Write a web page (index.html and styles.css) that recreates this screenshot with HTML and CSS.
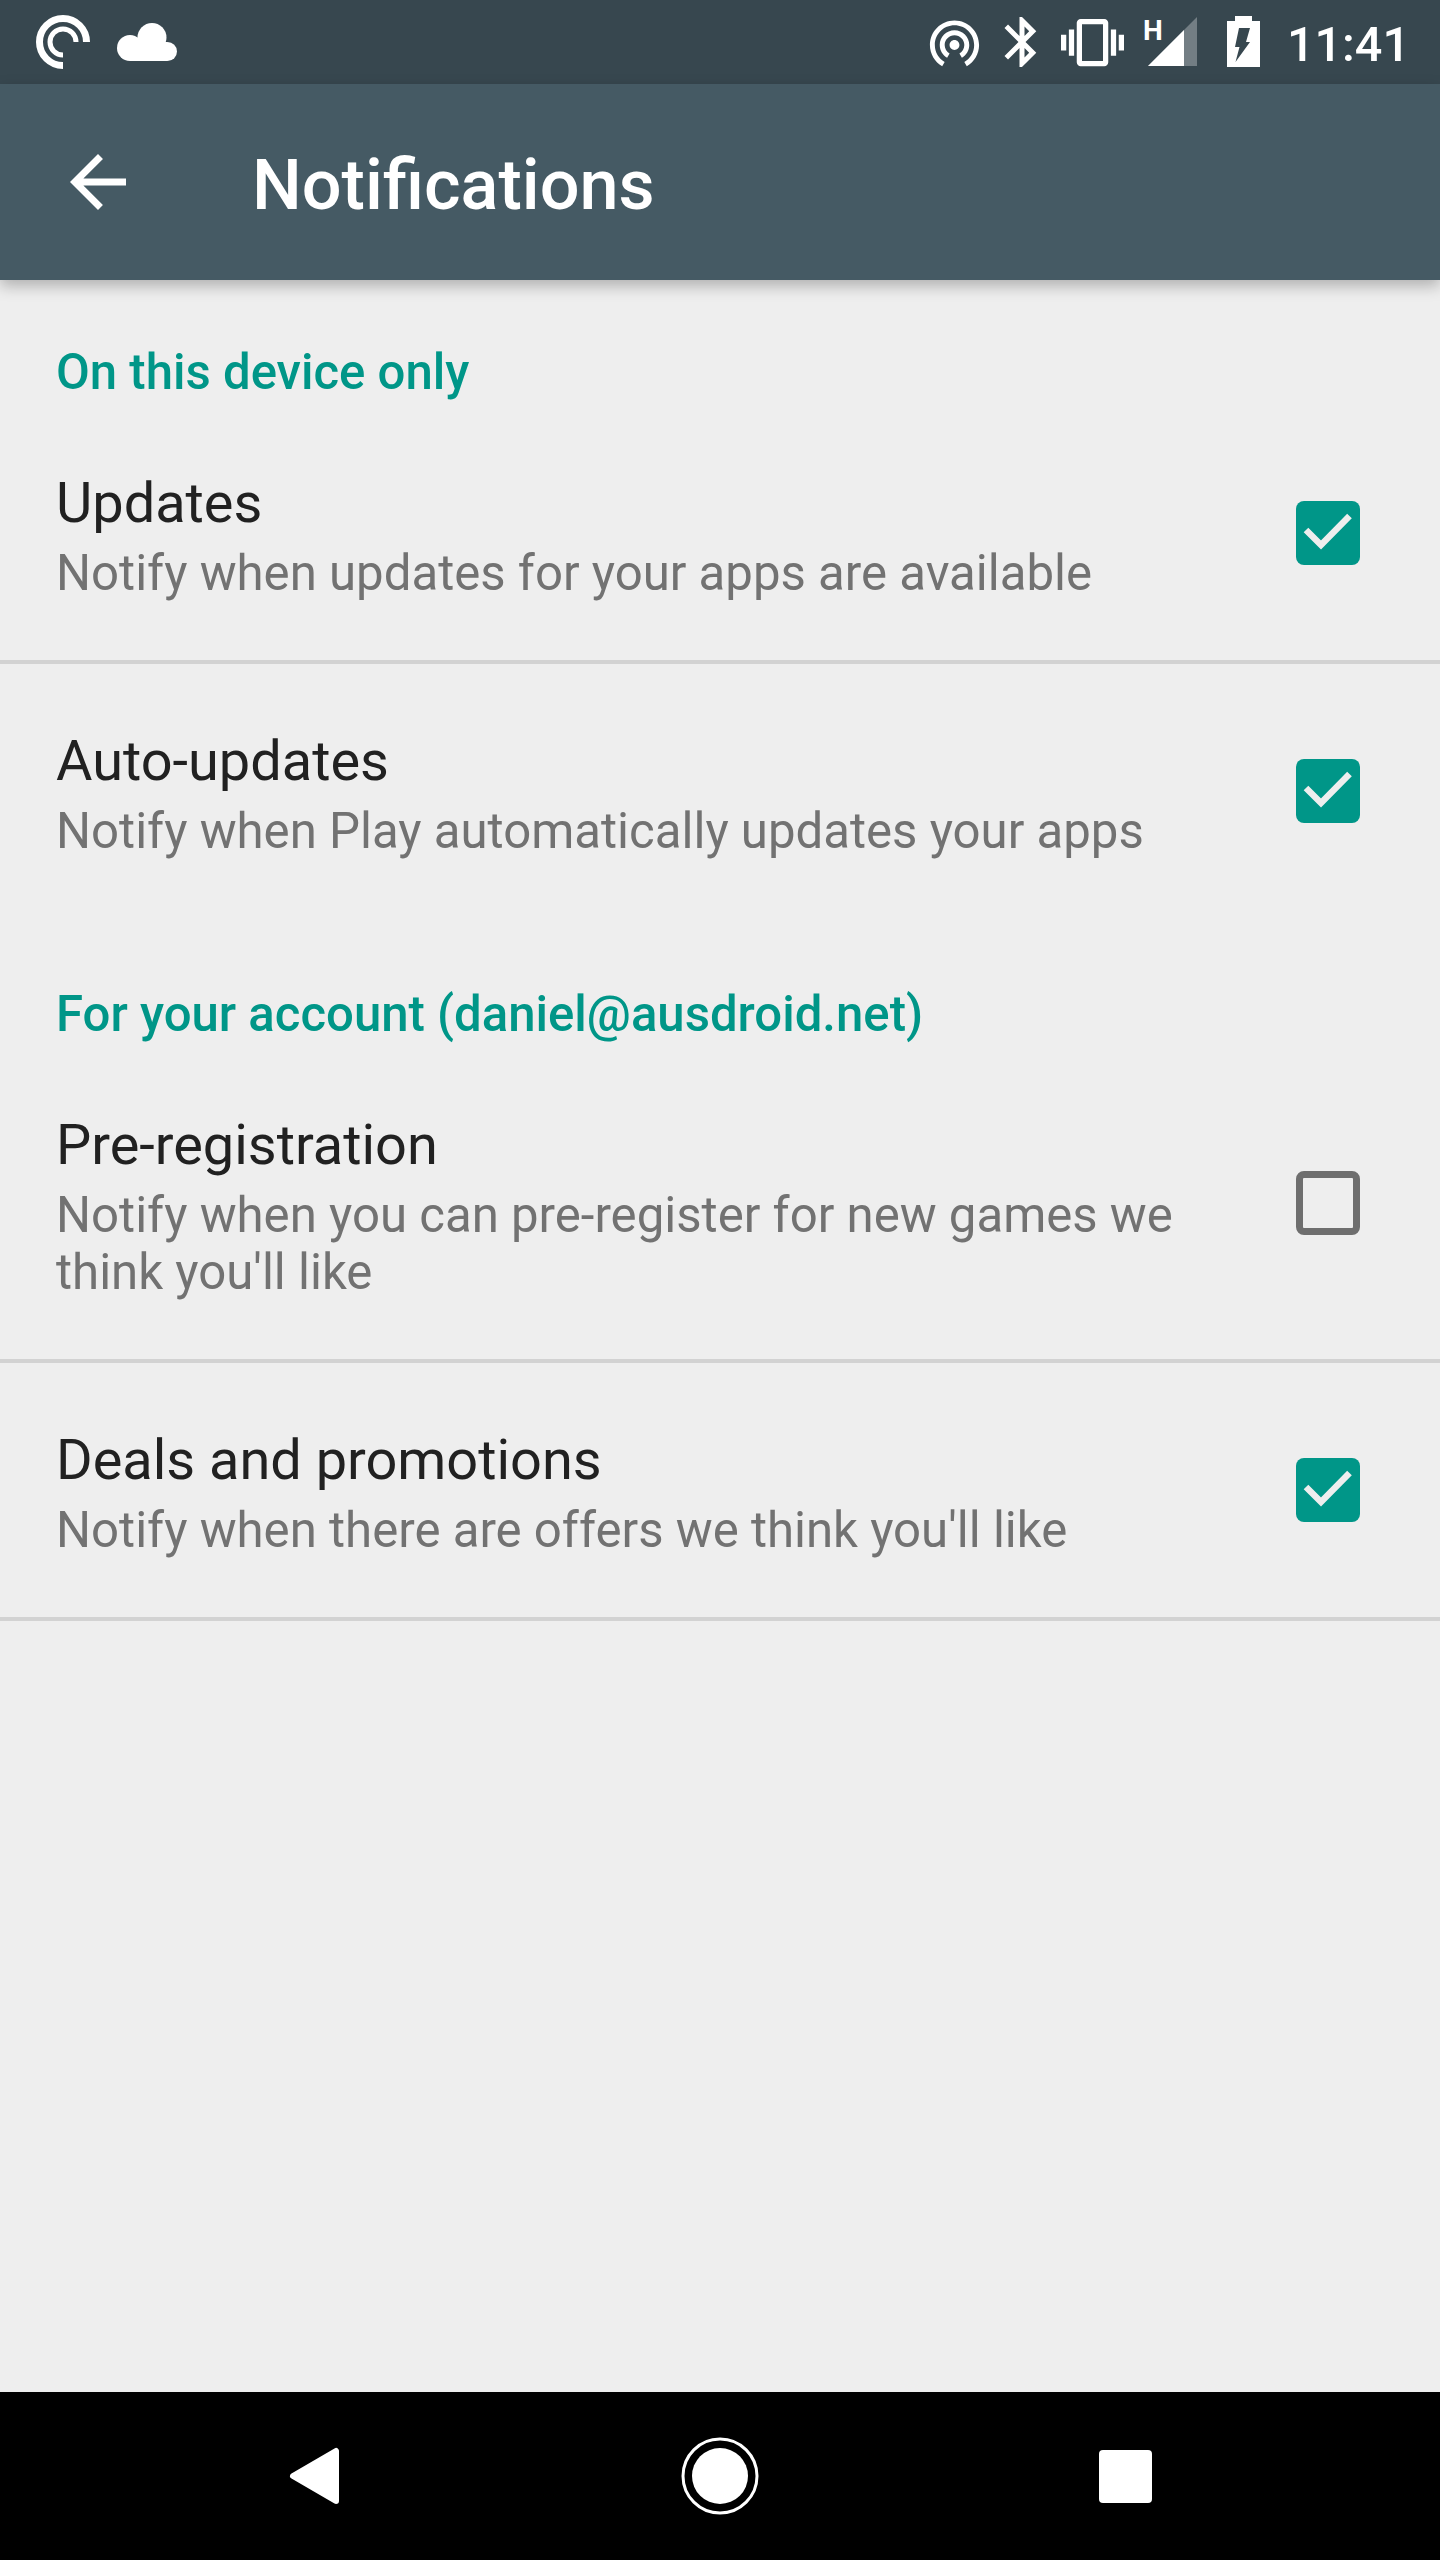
FILE: index.html
```html
<!DOCTYPE html>
<html lang="en">
<head>
<meta charset="utf-8">
<title>Notifications</title>
<link rel="stylesheet" href="styles.css">
</head>
<body>
<div class="screen">
  <header class="status">
    <div class="status-left">
      <svg class="ic-pocket" viewBox="36 15 54 54"><path class="ring-a" d="M86.5 42A23.500 23.500 0 1 0 63 65.500"/><path class="ring-b" d="M76 42A13 13 0 1 0 63 55"/></svg>
      <svg class="ic-cloud" viewBox="117 23 60 38"><circle cx="130" cy="48" r="13"/><circle cx="152" cy="37.500" r="14.500"/><circle cx="167.500" cy="51.500" r="9.500"/><rect x="130" y="42" width="37" height="19"/></svg>
    </div>
    <div class="status-right">
      <svg class="ic-tether" viewBox="0 0 24 24"><path d="M12 11c-1.100 0-2 .9-2 2s.9 2 2 2 2-.9 2-2-.9-2-2-2zm6 2c0-3.310-2.690-6-6-6s-6 2.690-6 6c0 2.220 1.210 4.150 3 5.190l1-1.740c-1.190-.7-2-1.970-2-3.450 0-2.210 1.790-4 4-4s4 1.790 4 4c0 1.480-.81 2.750-2 3.450l1 1.740c1.790-1.040 3-2.970 3-5.190zM12 3C6.480 3 2 7.480 2 13c0 3.700 2.010 6.920 4.990 8.650l1-1.730C5.610 18.530 4 15.960 4 13c0-4.420 3.580-8 8-8s8 3.580 8 8c0 2.960-1.610 5.530-4 6.920l1 1.730c2.990-1.730 5-4.950 5-8.650 0-5.520-4.480-10-10-10z"/></svg>
      <svg class="ic-bt" viewBox="0 0 24 24"><path d="M17.710 7.710L12 2h-1v7.590L6.410 5 5 6.410 10.590 12 5 17.590 6.410 19 11 14.410V22h1l5.710-5.710-4.300-4.290 4.300-4.290zM13 5.830l1.880 1.880L13 9.590V5.830zm1.880 10.460L13 18.170v-3.760l1.880 1.880z"/></svg>
      <svg class="ic-vib" viewBox="0 0 24 24"><path d="M0 15h2V9H0v6zm3 2h2V7H3v10zm19-8v6h2V9h-2zm-3 8h2V7h-2v10zM16.500 3h-9C6.670 3 6 3.670 6 4.500v15c0 .83.67 1.500 1.500 1.500h9c.83 0 1.500-.67 1.500-1.500v-15c0-.83-.67-1.500-1.500-1.500zM16 19H8V5h8v14z"/></svg>
      <div class="signal">
        <span class="signal-h">H</span>
        <svg class="ic-signal" viewBox="0 0 54 50"><polygon class="sig-back" points="5,49 54,0 54,49"/><polygon points="5,49 41,13 41,49"/></svg>
      </div>
      <svg class="ic-batt" viewBox="0 0 33 51"><path fill-rule="evenodd" d="M8 0h17v5h8v46H0V5h8zM12 12h11l-4 14h4L8.500 46l4-15H8z"/></svg>
      <span class="time">11:41</span>
    </div>
  </header>

  <div class="toolbar">
    <svg class="ic-back" viewBox="0 0 24 24"><path d="M20 11H7.830l5.590-5.590L12 4l-8 8 8 8 1.410-1.410L7.830 13H20v-2z"/></svg>
    <h1 class="toolbar-title">Notifications</h1>
  </div>

  <main class="content">
    <h2 class="section">On this device only</h2>
    <div class="row row-line">
      <div class="row-text">
        <div class="row-title">Updates</div>
        <div class="row-sum">Notify when updates for your apps are available</div>
      </div>
      <div class="box box-on"><svg class="check" viewBox="0 0 64 64"><path d="M10 29L25 44L53.500 15"/></svg></div>
    </div>
    <div class="row">
      <div class="row-text">
        <div class="row-title">Auto-updates</div>
        <div class="row-sum">Notify when Play automatically updates your apps</div>
      </div>
      <div class="box box-on"><svg class="check" viewBox="0 0 64 64"><path d="M10 29L25 44L53.500 15"/></svg></div>
    </div>
    <h2 class="section">For your account (daniel@ausdroid.net)</h2>
    <div class="row row-line">
      <div class="row-text">
        <div class="row-title">Pre-registration</div>
        <div class="row-sum">Notify when you can pre-register for new games we think you'll like</div>
      </div>
      <div class="box box-off"></div>
    </div>
    <div class="row row-line">
      <div class="row-text">
        <div class="row-title">Deals and promotions</div>
        <div class="row-sum">Notify when there are offers we think you'll like</div>
      </div>
      <div class="box box-on"><svg class="check" viewBox="0 0 64 64"><path d="M10 29L25 44L53.500 15"/></svg></div>
    </div>
  </main>

  <nav class="navbar">
    <div class="nav-cell"><svg class="nav-ic" viewBox="0 0 84 84"><polygon class="nav-back" points="20,42 63,17 63,67"/></svg></div>
    <div class="nav-cell"><svg class="nav-ic" viewBox="0 0 84 84"><circle class="nav-ring" cx="42" cy="42" r="37"/><circle cx="42" cy="42" r="28"/></svg></div>
    <div class="nav-cell"><div class="nav-square"></div></div>
  </nav>
</div>
</body>
</html>
```

FILE: styles.css
```css
* { box-sizing: border-box; }
html, body { margin: 0; padding: 0; }
body { width: 1440px; height: 2560px; overflow: hidden; font-family: Roboto, "Noto Sans", sans-serif; background: #eeeeee; }
svg { display: block; fill: #ffffff; flex: none; }

.screen { display: flex; flex-direction: column; width: 1440px; height: 2560px; }

.status { flex: none; height: 84px; background: #37474f; display: flex; justify-content: space-between; align-items: flex-start; padding: 0 30px 0 36px; color: #fff; }
.status-left { display: flex; align-items: flex-start; gap: 27px; padding-top: 15px; }
.status-right { display: flex; align-items: flex-start; }
.ic-pocket { width: 54px; height: 54px; fill: none; stroke: #fff; }
.ring-a { stroke-width: 7; }
.ring-b { stroke-width: 5; }
.ic-cloud { width: 60px; height: 38px; margin-top: 8px; }
.ic-tether { width: 59px; height: 59px; margin-top: 13px; }
.ic-bt { width: 60px; height: 60px; margin: 12px 0 0 8px; }
.ic-vib { width: 63px; height: 63px; margin: 11px 0 0 9px; }
.signal { position: relative; width: 54px; height: 50px; margin: 17px 0 0 19px; }
.signal-h { position: absolute; left: 0; top: -3px; font-size: 28px; line-height: 33px; font-weight: 700; }
.ic-signal { width: 54px; height: 50px; }
.sig-back { fill: rgba(255, 255, 255, 0.3); }
.ic-batt { width: 33px; height: 51px; margin: 16px 0 0 30px; }
.time { font-size: 48.5px; line-height: 58px; font-weight: 500; margin: 16px 0 0 27px; }

.toolbar { flex: none; position: relative; z-index: 1; height: 196px; background: #455a64; display: flex; align-items: center; padding-left: 56px; box-shadow: 0 6px 14px rgba(0, 0, 0, 0.26); }
.ic-back { width: 84px; height: 84px; }
.toolbar-title { margin: 6px 0 0 112px; font-size: 70.2px; line-height: 82px; font-weight: 500; color: #fff; }

.content { flex: 1; min-height: 0; }
.section { margin: 0; height: 122px; padding: 63px 56px 0; font-size: 49.1px; line-height: 58px; font-weight: 500; color: #009688; }

.row { display: flex; align-items: center; justify-content: space-between; padding: 68px 80px 62px 56px; }
.row-line { padding-bottom: 58px; border-bottom: 4px solid #d2d2d2; }
.row-line + .row { padding-top: 64px; }
.row-text { width: 1130px; }
.row-title { font-size: 55.9px; line-height: 66px; color: #212121; }
.row-sum { margin-top: 9px; font-size: 49.15px; line-height: 57px; color: #727272; }

.box { flex: none; width: 64px; height: 64px; margin-bottom: 7px; border-radius: 8px; }
.box-on { background: #009688; }
.box-off { border: 7px solid #6e6e6e; }
.check { width: 64px; height: 64px; fill: none; stroke: #eeeeee; stroke-width: 6.500; }

.navbar { flex: none; height: 168px; background: #000; display: flex; justify-content: center; align-items: center; }
.nav-cell { width: 405px; display: flex; justify-content: center; align-items: center; }
.nav-ic { width: 84px; height: 84px; }
.nav-back { stroke: #fff; stroke-width: 6; stroke-linejoin: round; }
.nav-ring { fill: none; stroke: #fff; stroke-width: 3; }
.nav-square { width: 53px; height: 53px; background: #fff; border-radius: 4px; }
```
